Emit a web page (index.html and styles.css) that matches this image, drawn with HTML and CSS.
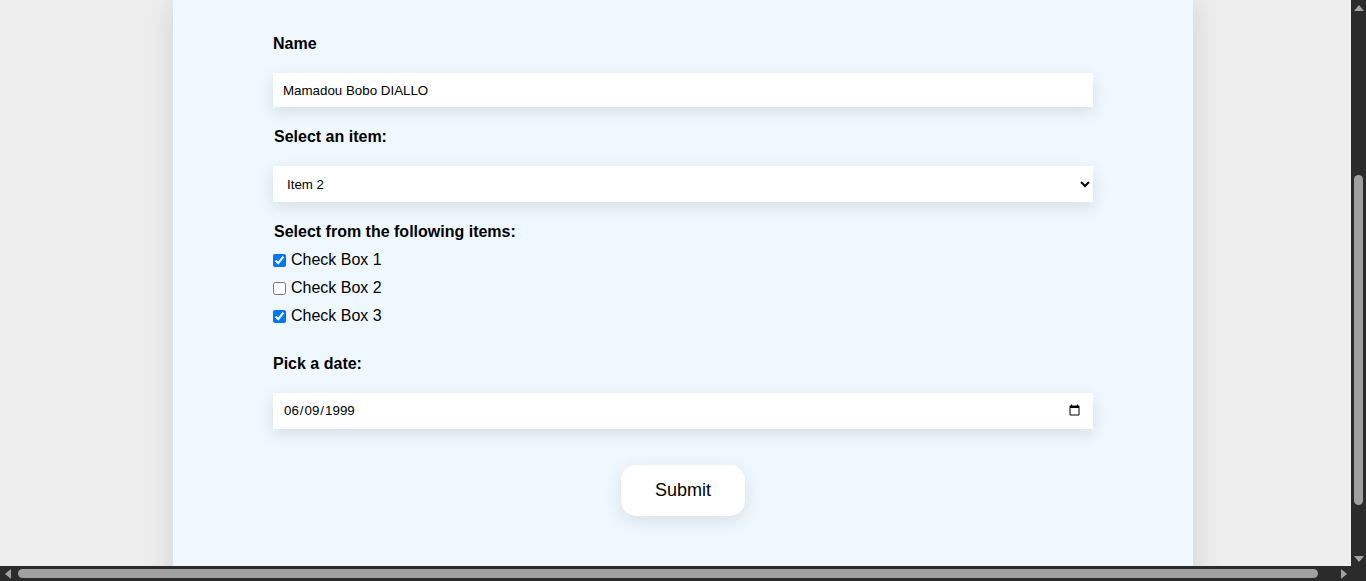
FILE: index.html
```html
<!DOCTYPE html>
<html lang="en">
<head>
<meta charset="utf-8">
<title>Form</title>
<link rel="stylesheet" href="styles.css">
</head>
<body>
<div class="screen">
  <div class="viewport">
    <div class="page">
      <main class="card">
        <form class="form">
          <div class="field">
            <label class="label" for="name">Name</label>
            <input class="control control-text" id="name" type="text" value="Mamadou Bobo DIALLO">
          </div>
          <div class="field">
            <label class="label label-shift" for="item">Select an item:</label>
            <select class="control control-select" id="item">
              <option>Item 1</option>
              <option selected>Item 2</option>
              <option>Item 3</option>
            </select>
          </div>
          <div class="field field-checks">
            <span class="label label-shift">Select from the following items:</span>
            <div class="checks">
              <label class="check"><input type="checkbox" checked> Check Box 1</label>
              <label class="check"><input type="checkbox"> Check Box 2</label>
              <label class="check"><input type="checkbox" checked> Check Box 3</label>
            </div>
          </div>
          <div class="field field-date">
            <label class="label" for="date">Pick a date:</label>
            <input class="control control-date" id="date" type="date" value="1999-06-09">
          </div>
          <div class="actions">
            <button class="submit" type="button">Submit</button>
          </div>
        </form>
      </main>
    </div>
  </div>
  <div class="vbar">
    <span class="arrow arrow-up"></span>
    <div class="vtrack"><span class="vthumb"></span></div>
    <span class="arrow arrow-down"></span>
  </div>
  <div class="hbar">
    <span class="arrow arrow-left"></span>
    <div class="htrack"><span class="hthumb"></span></div>
    <span class="arrow arrow-right"></span>
  </div>
  <div class="corner"></div>
</div>
</body>
</html>
```

FILE: styles.css
```css
html, body {
  margin: 0;
  padding: 0;
}
body {
  background: #2b2b2b;
  font-family: "Liberation Sans", Arial, sans-serif;
  color: #000;
  overflow: hidden;
}
.screen {
  display: grid;
  grid-template-columns: 1351px 15px;
  grid-template-rows: 566px 15px;
  width: 1366px;
  height: 581px;
}
.viewport {
  overflow: hidden;
  background: #eeeeee;
}
.page {
  width: 1366px;
  height: 100%;
}
.card {
  width: 820px;
  height: 100%;
  box-sizing: content-box;
  margin: 0 auto;
  padding: 34px 100px 0;
  background: #f0f8ff;
  box-shadow: 0 0 30px rgba(0, 0, 0, 0.12);
}
.form {
  display: flex;
  flex-direction: column;
}
.field {
  display: flex;
  flex-direction: column;
  margin-bottom: 20px;
}
.label {
  font-size: 16px;
  font-weight: bold;
  line-height: 18px;
  padding-top: 1px;
  margin-bottom: 20px;
}
.label-shift {
  padding-left: 1px;
}
.control {
  box-sizing: border-box;
  width: 100%;
  border: none;
  outline: none;
  background: #fff;
  color: #000;
  font-family: "Liberation Sans", Arial, sans-serif;
  font-size: 13.33px;
  box-shadow: 0 5px 16px rgba(0, 0, 0, 0.11);
  margin: 0;
}
.control-text {
  height: 34px;
  padding: 0 10px;
}
.control-select {
  height: 36px;
  padding: 0 10px;
}
.control-date {
  height: 36px;
  padding: 0 10px;
}
.field-checks .label {
  margin-bottom: 5px;
}
.field-checks {
  margin-bottom: 24px;
}
.checks {
  display: flex;
  flex-direction: column;
}
.check {
  display: flex;
  align-items: center;
  height: 28px;
  font-size: 16px;
}
.check input {
  margin: 0 5px 0 0;
  width: 13px;
  height: 13px;
}
.field-date {
  margin-bottom: 36px;
}
.actions {
  display: flex;
  justify-content: center;
}
.submit {
  border: none;
  background: #fff;
  border-radius: 15px;
  padding: 0 34px;
  height: 51px;
  font-family: "Liberation Sans", Arial, sans-serif;
  font-size: 18px;
  color: #000;
  box-shadow: 0 5px 18px rgba(0, 0, 0, 0.1);
  cursor: pointer;
}

/* simulated browser scrollbars */
.vbar {
  display: flex;
  flex-direction: column;
  background: #2b2b2b;
}
.hbar {
  display: flex;
  background: #2b2b2b;
}
.corner {
  background: #2b2b2b;
}
.arrow {
  flex: none;
  width: 15px;
  height: 15px;
  display: flex;
  align-items: center;
  justify-content: center;
}
.arrow::before {
  content: "";
  width: 0;
  height: 0;
  border-style: solid;
  border-color: transparent;
}
.arrow-up::before {
  border-width: 0 5px 6px 5px;
  border-bottom-color: #a3a3a3;
}
.arrow-down::before {
  border-width: 6px 5px 0 5px;
  border-top-color: #a3a3a3;
}
.arrow-left::before {
  border-width: 5px 6px 5px 0;
  border-right-color: #a3a3a3;
}
.arrow-right::before {
  border-width: 5px 0 5px 6px;
  border-left-color: #a3a3a3;
}
.vtrack {
  flex: 1;
  display: flex;
  flex-direction: column;
  align-items: center;
}
.vthumb {
  width: 9px;
  height: 330px;
  margin-top: 160px;
  border-radius: 5px;
  background: #a0a0a0;
}
.htrack {
  flex: 1;
  display: flex;
  align-items: center;
}
.hthumb {
  height: 9px;
  width: 1300px;
  margin-left: 3px;
  border-radius: 5px;
  background: #a0a0a0;
}
```
